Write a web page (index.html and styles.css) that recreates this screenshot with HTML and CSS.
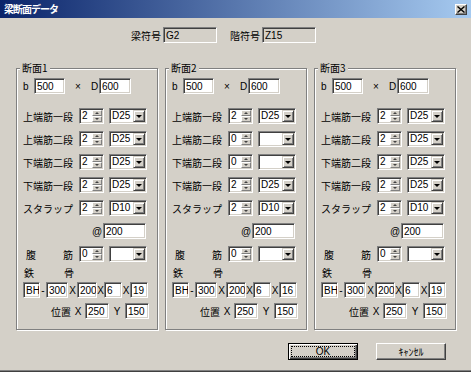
FILE: index.html
```html
<!DOCTYPE html>
<html lang="ja">
<head>
    <meta charset="UTF-8">
    <meta name="viewport" content="width=device-width, initial-scale=1.0">
    <title>梁断面データ</title>
    <link rel="stylesheet" href="styles.css">
</head>
<body>
    <div class="dialog">
        <div class="titlebar">
            <span class="title">梁断面データ</span>
            <span class="close-btn">
                <svg width="8" height="7" viewBox="0 0 8 7"><path d="M0.5 0.5 L7.5 6.5 M7.5 0.5 L0.5 6.5" stroke="#000" stroke-width="1.4"/></svg>
            </span>
        </div>

        <div class="head">
            <span class="head-label">梁符号</span>
            <input class="field field-ro w-head" type="text" value="G2" readonly>
            <span class="head-label second">階符号</span>
            <input class="field field-ro w-head" type="text" value="Z15" readonly>
        </div>

        <div class="sections">
            <!-- 断面1 -->
            <div class="section">
                <span class="legend">断面1</span>
                <div class="row dim-row">
                    <span class="dim-b">b</span>
                    <input class="field w-dim" type="text" value="500">
                    <span class="dim-x">×</span>
                    <span class="dim-d">D</span>
                    <input class="field w-dim2" type="text" value="600">
                </div>
                <div class="row bar-row first">
                    <span class="bar-label">上端筋一段</span>
                    <div class="spin"><input class="spin-val" type="text" value="2"><span class="spin-btns"><i class="up"></i><i class="down"></i></span></div>
                    <div class="combo"><span class="combo-val">D25</span><span class="combo-btn"></span></div>
                </div>
                <div class="row bar-row">
                    <span class="bar-label">上端筋二段</span>
                    <div class="spin"><input class="spin-val" type="text" value="2"><span class="spin-btns"><i class="up"></i><i class="down"></i></span></div>
                    <div class="combo"><span class="combo-val">D25</span><span class="combo-btn"></span></div>
                </div>
                <div class="row bar-row">
                    <span class="bar-label">下端筋二段</span>
                    <div class="spin"><input class="spin-val" type="text" value="2"><span class="spin-btns"><i class="up"></i><i class="down"></i></span></div>
                    <div class="combo"><span class="combo-val">D25</span><span class="combo-btn"></span></div>
                </div>
                <div class="row bar-row">
                    <span class="bar-label">下端筋一段</span>
                    <div class="spin"><input class="spin-val" type="text" value="2"><span class="spin-btns"><i class="up"></i><i class="down"></i></span></div>
                    <div class="combo"><span class="combo-val">D25</span><span class="combo-btn"></span></div>
                </div>
                <div class="row bar-row">
                    <span class="bar-label">スタラップ</span>
                    <div class="spin"><input class="spin-val" type="text" value="2"><span class="spin-btns"><i class="up"></i><i class="down"></i></span></div>
                    <div class="combo"><span class="combo-val">D10</span><span class="combo-btn"></span></div>
                </div>
                <div class="row">
                    <span class="at">@</span>
                    <input class="field w-at" type="text" value="200">
                </div>
                <div class="row">
                    <span class="split-label web"><span>腹</span><span>筋</span></span>
                    <div class="spin"><input class="spin-val" type="text" value="0"><span class="spin-btns"><i class="up"></i><i class="down"></i></span></div>
                    <div class="combo"><span class="combo-val"></span><span class="combo-btn"></span></div>
                </div>
                <div class="row label-row">
                    <span class="split-label steel"><span>鉄</span><span>骨</span></span>
                </div>
                <div class="row bh-row">
                    <input class="field w-bh" type="text" value="BH">
                    <span class="sep w-dash">-</span>
                    <input class="field w-h" type="text" value="300">
                    <span class="sep w-x1">X</span>
                    <input class="field w-b" type="text" value="200">
                    <span class="sep w-x2">X</span>
                    <input class="field w-t" type="text" value="6">
                    <span class="sep w-x3">X</span>
                    <input class="field w-t" type="text" value="19">
                </div>
                <div class="row pos-row">
                    <span class="pos-label">位置</span>
                    <span class="sep w-px">X</span>
                    <input class="field w-pos" type="text" value="250">
                    <span class="sep w-py">Y</span>
                    <input class="field w-pos" type="text" value="150">
                </div>
            </div>

            <!-- 断面2 -->
            <div class="section">
                <span class="legend">断面2</span>
                <div class="row dim-row">
                    <span class="dim-b">b</span>
                    <input class="field w-dim" type="text" value="500">
                    <span class="dim-x">×</span>
                    <span class="dim-d">D</span>
                    <input class="field w-dim2" type="text" value="600">
                </div>
                <div class="row bar-row first">
                    <span class="bar-label">上端筋一段</span>
                    <div class="spin"><input class="spin-val" type="text" value="2"><span class="spin-btns"><i class="up"></i><i class="down"></i></span></div>
                    <div class="combo"><span class="combo-val">D25</span><span class="combo-btn"></span></div>
                </div>
                <div class="row bar-row">
                    <span class="bar-label">上端筋二段</span>
                    <div class="spin"><input class="spin-val" type="text" value="0"><span class="spin-btns"><i class="up"></i><i class="down"></i></span></div>
                    <div class="combo"><span class="combo-val"></span><span class="combo-btn"></span></div>
                </div>
                <div class="row bar-row">
                    <span class="bar-label">下端筋二段</span>
                    <div class="spin"><input class="spin-val" type="text" value="0"><span class="spin-btns"><i class="up"></i><i class="down"></i></span></div>
                    <div class="combo"><span class="combo-val"></span><span class="combo-btn"></span></div>
                </div>
                <div class="row bar-row">
                    <span class="bar-label">下端筋一段</span>
                    <div class="spin"><input class="spin-val" type="text" value="2"><span class="spin-btns"><i class="up"></i><i class="down"></i></span></div>
                    <div class="combo"><span class="combo-val">D25</span><span class="combo-btn"></span></div>
                </div>
                <div class="row bar-row">
                    <span class="bar-label">スタラップ</span>
                    <div class="spin"><input class="spin-val" type="text" value="2"><span class="spin-btns"><i class="up"></i><i class="down"></i></span></div>
                    <div class="combo"><span class="combo-val">D10</span><span class="combo-btn"></span></div>
                </div>
                <div class="row">
                    <span class="at">@</span>
                    <input class="field w-at" type="text" value="200">
                </div>
                <div class="row">
                    <span class="split-label web"><span>腹</span><span>筋</span></span>
                    <div class="spin"><input class="spin-val" type="text" value="0"><span class="spin-btns"><i class="up"></i><i class="down"></i></span></div>
                    <div class="combo"><span class="combo-val"></span><span class="combo-btn"></span></div>
                </div>
                <div class="row label-row">
                    <span class="split-label steel"><span>鉄</span><span>骨</span></span>
                </div>
                <div class="row bh-row">
                    <input class="field w-bh" type="text" value="BH">
                    <span class="sep w-dash">-</span>
                    <input class="field w-h" type="text" value="300">
                    <span class="sep w-x1">X</span>
                    <input class="field w-b" type="text" value="200">
                    <span class="sep w-x2">X</span>
                    <input class="field w-t" type="text" value="6">
                    <span class="sep w-x3">X</span>
                    <input class="field w-t" type="text" value="16">
                </div>
                <div class="row pos-row">
                    <span class="pos-label">位置</span>
                    <span class="sep w-px">X</span>
                    <input class="field w-pos" type="text" value="250">
                    <span class="sep w-py">Y</span>
                    <input class="field w-pos" type="text" value="150">
                </div>
            </div>

            <!-- 断面3 -->
            <div class="section">
                <span class="legend">断面3</span>
                <div class="row dim-row">
                    <span class="dim-b">b</span>
                    <input class="field w-dim" type="text" value="500">
                    <span class="dim-x">×</span>
                    <span class="dim-d">D</span>
                    <input class="field w-dim2" type="text" value="600">
                </div>
                <div class="row bar-row first">
                    <span class="bar-label">上端筋一段</span>
                    <div class="spin"><input class="spin-val" type="text" value="2"><span class="spin-btns"><i class="up"></i><i class="down"></i></span></div>
                    <div class="combo"><span class="combo-val">D25</span><span class="combo-btn"></span></div>
                </div>
                <div class="row bar-row">
                    <span class="bar-label">上端筋二段</span>
                    <div class="spin"><input class="spin-val" type="text" value="2"><span class="spin-btns"><i class="up"></i><i class="down"></i></span></div>
                    <div class="combo"><span class="combo-val">D25</span><span class="combo-btn"></span></div>
                </div>
                <div class="row bar-row">
                    <span class="bar-label">下端筋二段</span>
                    <div class="spin"><input class="spin-val" type="text" value="2"><span class="spin-btns"><i class="up"></i><i class="down"></i></span></div>
                    <div class="combo"><span class="combo-val">D25</span><span class="combo-btn"></span></div>
                </div>
                <div class="row bar-row">
                    <span class="bar-label">下端筋一段</span>
                    <div class="spin"><input class="spin-val" type="text" value="2"><span class="spin-btns"><i class="up"></i><i class="down"></i></span></div>
                    <div class="combo"><span class="combo-val">D25</span><span class="combo-btn"></span></div>
                </div>
                <div class="row bar-row">
                    <span class="bar-label">スタラップ</span>
                    <div class="spin"><input class="spin-val" type="text" value="2"><span class="spin-btns"><i class="up"></i><i class="down"></i></span></div>
                    <div class="combo"><span class="combo-val">D10</span><span class="combo-btn"></span></div>
                </div>
                <div class="row">
                    <span class="at">@</span>
                    <input class="field w-at" type="text" value="200">
                </div>
                <div class="row">
                    <span class="split-label web"><span>腹</span><span>筋</span></span>
                    <div class="spin"><input class="spin-val" type="text" value="0"><span class="spin-btns"><i class="up"></i><i class="down"></i></span></div>
                    <div class="combo"><span class="combo-val"></span><span class="combo-btn"></span></div>
                </div>
                <div class="row label-row">
                    <span class="split-label steel"><span>鉄</span><span>骨</span></span>
                </div>
                <div class="row bh-row">
                    <input class="field w-bh" type="text" value="BH">
                    <span class="sep w-dash">-</span>
                    <input class="field w-h" type="text" value="300">
                    <span class="sep w-x1">X</span>
                    <input class="field w-b" type="text" value="200">
                    <span class="sep w-x2">X</span>
                    <input class="field w-t" type="text" value="6">
                    <span class="sep w-x3">X</span>
                    <input class="field w-t" type="text" value="19">
                </div>
                <div class="row pos-row">
                    <span class="pos-label">位置</span>
                    <span class="sep w-px">X</span>
                    <input class="field w-pos" type="text" value="250">
                    <span class="sep w-py">Y</span>
                    <input class="field w-pos" type="text" value="150">
                </div>
            </div>
        </div>

        <div class="buttons">
            <button class="btn btn-default">OK</button>
            <button class="btn">ｷｬﾝｾﾙ</button>
        </div>
    </div>
</body>
</html>
```

FILE: styles.css
```css
body {
    margin: 0;
    font-family: "Liberation Sans", "Noto Sans CJK JP", sans-serif;
    font-size: 10px;
    color: #000;
    background-color: #d4d0c8;
}

.dialog {
    width: 471px;
    height: 372px;
    box-sizing: border-box;
    background-color: #d4d0c8;
    border-bottom: 1px solid #404040;
    box-shadow: inset 0 -1px #808080;
    display: flex;
    flex-direction: column;
}

/* title bar */
.titlebar {
    height: 18px;
    padding: 0 4px;
    display: flex;
    align-items: center;
    justify-content: space-between;
    background: linear-gradient(to right, #0a246a, #a6caf0);
}

.title {
    color: #fff;
    font-family: "Noto Sans CJK JP", sans-serif;
    font-weight: bold;
    letter-spacing: -1px;
    line-height: 14px;
}

.close-btn {
    width: 12px;
    height: 11px;
    box-sizing: border-box;
    display: flex;
    align-items: center;
    justify-content: center;
    background-color: #d4d0c8;
    border: 1px solid;
    border-color: #fff #404040 #404040 #fff;
    box-shadow: inset -1px -1px #808080;
}

/* header row */
.head {
    height: 16px;
    margin-top: 9px;
    padding-left: 131px;
    display: flex;
    align-items: center;
}

.head-label {
    margin-right: 2px;
    font-family: "Noto Sans CJK JP", sans-serif;
}

.head-label.second {
    margin-left: 13px;
}

/* inputs */
.field {
    box-sizing: border-box;
    height: 16px;
    margin: 0;
    padding: 0 0 0 2px;
    border: 1px solid;
    border-color: #808080 #fff #fff #808080;
    box-shadow: inset 1px 1px #404040, inset -1px -1px #d4d0c8;
    background-color: #fff;
    font: inherit;
    color: #000;
    outline: none;
}

.field-ro {
    background-color: #d4d0c8;
}

.w-head { width: 54px; }
.w-dim { width: 31px; }
.w-dim2 { width: 32px; }
.w-at { width: 43px; }
.w-bh { width: 17px; }
.w-h { width: 22px; }
.w-b { width: 20px; }
.w-t { width: 18px; }
.w-pos { width: 24px; }

/* group boxes */
.sections {
    margin-top: 25px;
    padding-left: 16px;
    display: flex;
    gap: 7px;
}

.section {
    position: relative;
    width: 142px;
    box-sizing: border-box;
    padding: 9px 0 10px;
    border: 1px solid #808080;
    box-shadow: inset 1px 1px #fff, 1px 1px #fff;
}

.legend {
    position: absolute;
    top: -7px;
    left: 3px;
    padding: 0 2px;
    line-height: 12px;
    background-color: #d4d0c8;
    font-family: "Noto Sans CJK JP", sans-serif;
}

.row {
    height: 16px;
    margin-top: 7px;
    padding-left: 6px;
    display: flex;
    align-items: center;
}

.dim-row { margin-top: 0; }
.bar-row.first { margin-top: 14px; }

.dim-b { width: 11px; }
.dim-x { width: 16px; margin-left: 10px; }
.dim-d { width: 8px; }

.bar-label {
    width: 50px;
    text-align: center;
    font-family: "Noto Sans CJK JP", sans-serif;
    white-space: nowrap;
}

/* spinner */
.spin {
    width: 25px;
    height: 16px;
    margin-left: 6px;
    box-sizing: border-box;
    padding: 1px;
    display: flex;
    border: 1px solid;
    border-color: #808080 #fff #fff #808080;
    box-shadow: inset 1px 1px #404040, inset -1px -1px #d4d0c8;
    background-color: #fff;
}

.spin-val {
    width: 0;
    flex: 1;
    margin: 0;
    padding: 0 0 0 1px;
    border: none;
    background: transparent;
    font: inherit;
    line-height: 12px;
    outline: none;
}

.spin-btns {
    width: 10px;
    display: flex;
    flex-direction: column;
}

.spin-btns i {
    height: 6px;
    box-sizing: border-box;
    display: flex;
    align-items: center;
    justify-content: center;
    background-color: #d4d0c8;
    border: 1px solid;
    border-color: #fff #808080 #808080 #fff;
}

.spin-btns i::after {
    content: "";
    border-left: 2px solid transparent;
    border-right: 2px solid transparent;
}

.spin-btns .up::after { border-bottom: 2px solid #404040; }
.spin-btns .down::after { border-top: 2px solid #404040; }

/* combo box */
.combo {
    width: 38px;
    height: 16px;
    margin-left: 5px;
    box-sizing: border-box;
    padding: 1px;
    display: flex;
    align-items: center;
    border: 1px solid;
    border-color: #808080 #fff #fff #808080;
    box-shadow: inset 1px 1px #404040, inset -1px -1px #d4d0c8;
    background-color: #fff;
}

.combo-val {
    flex: 1;
    padding-left: 1px;
    line-height: 12px;
}

.combo-btn {
    width: 12px;
    height: 12px;
    box-sizing: border-box;
    display: flex;
    align-items: center;
    justify-content: center;
    background-color: #d4d0c8;
    border: 1px solid;
    border-color: #d4d0c8 #404040 #404040 #d4d0c8;
    box-shadow: inset 1px 1px #fff, inset -1px -1px #808080;
}

.combo-btn::after {
    content: "";
    border-left: 3px solid transparent;
    border-right: 3px solid transparent;
    border-top: 3px solid #000;
}

.at {
    width: 11px;
    margin-left: 69px;
}

.split-label {
    display: flex;
    justify-content: space-between;
    font-family: "Noto Sans CJK JP", sans-serif;
}

.split-label.web { width: 47px; margin-left: 3px; }
.split-label.steel { width: 50px; margin-left: 1px; }

.label-row {
    height: 12px;
    margin-top: 4px;
}

.bh-row { margin-top: 4px; }
.pos-row { margin-top: 5px; }

.sep { text-align: center; }
.w-dash { width: 6px; }
.w-x1 { width: 9px; }
.w-x2 { width: 7px; }
.w-x3 { width: 8px; }
.w-px { width: 14px; }
.w-py { width: 16px; }

.pos-label {
    width: 20px;
    margin-left: 28px;
    font-family: "Noto Sans CJK JP", sans-serif;
}

/* buttons */
.buttons {
    margin-top: 13px;
    padding-left: 288px;
    display: flex;
    gap: 18px;
}

.btn {
    width: 70px;
    height: 17px;
    box-sizing: border-box;
    padding: 0;
    font: inherit;
    color: #000;
    background-color: #d4d0c8;
    border: 1px solid;
    border-color: #fff #404040 #404040 #fff;
    box-shadow: inset -1px -1px #808080;
}

.btn-default {
    border-color: #000;
    box-shadow: inset 1px 1px #fff, inset -1px -1px #404040, inset -2px -2px #808080;
    outline: 1px dotted #000;
    outline-offset: -4px;
}
```
